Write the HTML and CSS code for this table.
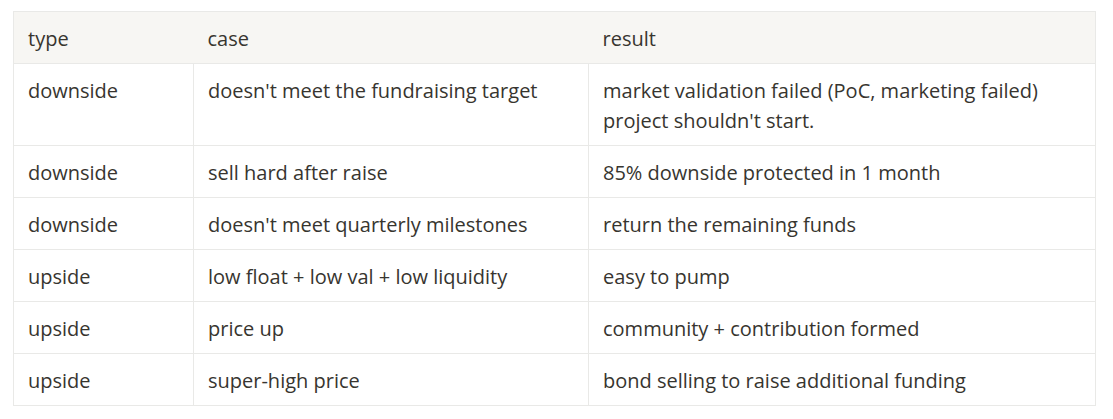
FILE: index.html
```html
<!DOCTYPE html>
<html>
<head>
<meta charset="utf-8">
<link rel="stylesheet" href="styles.css">
</head>
<body>
<table class="grid">
  <colgroup>
    <col class="c1"><col class="c2"><col class="c3">
  </colgroup>
  <thead>
    <tr><th>type</th><th>case</th><th>result</th></tr>
  </thead>
  <tbody>
    <tr><td>downside</td><td>doesn't meet the fundraising target</td><td>market validation failed (PoC, marketing failed)<br>project shouldn't start.</td></tr>
    <tr><td>downside</td><td>sell hard after raise</td><td>85% downside protected in 1 month</td></tr>
    <tr><td>downside</td><td>doesn't meet quarterly milestones</td><td>return the remaining funds</td></tr>
    <tr><td>upside</td><td>low float + low val + low liquidity</td><td>easy to pump</td></tr>
    <tr><td>upside</td><td>price up</td><td>community + contribution formed</td></tr>
    <tr><td>upside</td><td>super-high price</td><td>bond selling to raise additional funding</td></tr>
  </tbody>
</table>
</body>
</html>
```
FILE: styles.css
```css
html, body { margin: 0; background: #fff; }
body { padding: 11px 18px 0 13px; font-family: "Open Sans", "Noto Sans", sans-serif; color: #37352f; }
.grid { border-collapse: collapse; table-layout: fixed; width: 1082px; font-size: 20px; line-height: 30px; }
.c1 { width: 180px; }
.c2 { width: 395px; }
.c3 { width: 507px; }
th, td { text-align: left; font-weight: 400; padding: 12px 14px 9px 14px; border: 1px solid #e9e9e7; vertical-align: top; }
th { background: #f7f6f3; border-left: none; border-right: none; }
thead tr th:first-child { border-left: 1px solid #e9e9e7; }
thead tr th:last-child { border-right: 1px solid #e9e9e7; }
```
